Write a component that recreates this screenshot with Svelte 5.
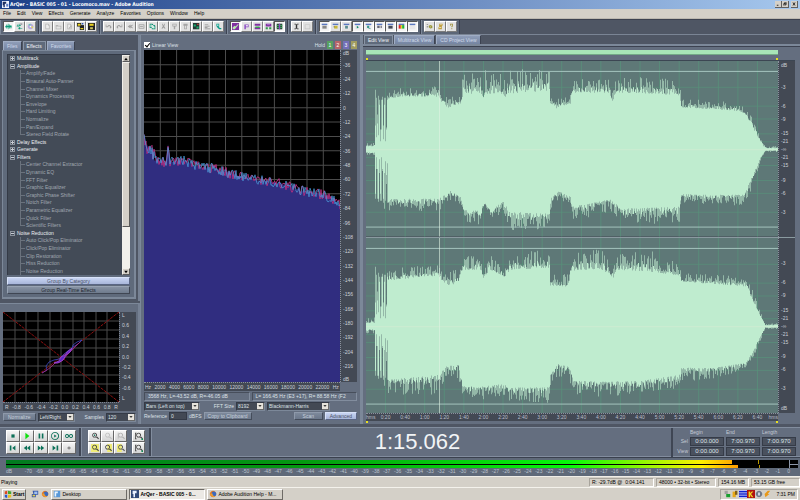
<script>
  let linearView = true;
  let effectTab = 'Effects';
  let viewTab = 'Edit View';
  let reference = '0';

  const menus = ['File', 'Edit', 'View', 'Effects', 'Generate', 'Analyze', 'Favorites', 'Options', 'Window', 'Help'];

  const page = 'M2 1h4l2 2v6H2z';
  const win = [['M1 1h8v8H1z', '#e8e8ea'], ['M1 1h8v2H1z', '#5a78c0']];

  // every icon is a list of [path, fill] on a 10x10 grid
  const toolGroups = [
    [
      { label: 'Edit view', on: true, art: [['M0 5h1V4h1V2h1v2h1V1h1v3h1V2h1v2h1V3h1v2h1v1H9v2H8V6H7v2H6V6H5v3H4V6H3v2H2V6H0z', '#0c9c78']] },
      { label: 'Multitrack view', art: [['M1 4h1V2h1v2h1V1h1v2h2v1H5v1H1zM3 7h1V6h2v1h3v1H6v1H4V8H3z', '#0c9c78'], ['M6 1h3v1H6z', '#445']] },
      { label: 'CD view', art: [['M5 1a4 4 0 1 0 .1 0z', '#b8a8dc'], ['M5 5L2 2a4 4 0 0 1 3-1z', '#60c8b0'], ['M5 5l3 3a4 4 0 0 0 1-3z', '#e0d850'], ['M4 4h2v2H4z', '#fff']] }
    ],
    [
      { label: 'New', art: [[page, '#b4b4b4'], ['M3 2h3v2h1v4H3z', '#ececec']] },
      { label: 'Open', art: [['M1 3h3l1 1h4v5H1z', '#b4b4b4'], ['M2 5h6v3H2z', '#e4e4e4']] },
      { label: 'Close', art: [[page, '#b4b4b4'], ['M3 2h3v2h1v4H3z', '#ececec'], ['M4 7l3-3 1 1-3 3z', '#aaa']] },
      { label: 'Save as', art: [['M0 0h6v5H0z', '#222'], ['M4 3h6v7H4z', '#222'], ['M1 1h4v3H1zM5 7h4v2H5z', '#e8d020'], ['M7 0h2v2H7z', '#2858c0']] },
      { label: 'Save', art: [['M0 0h10v10H0z', '#222'], ['M2 1h6v3H2z', '#e8d020'], ['M3 6h4v3H3z', '#c8c060']] }
    ],
    [
      { label: 'Undo', art: [['M1 2h1v3h1L5 3h2l2 2v2L7 8V5L6 4 4 6H1z', '#a0a0a0']] },
      { label: 'Redo', art: [['M9 2H8v3H7L5 3H3L1 5v2l2 1V5l1-1 2 2h3z', '#a0a0a0']] },
      { label: 'Repeat', art: [['M1 5l4-3v2l3-2v2L6 5l2 1v2L5 6v2z', '#a0a0a0']] },
      { label: 'Trim', art: [['M1 2h8v6H1zM2 3v4h6V3z', '#8a8a8a'], ['M3 4h4v2H3z', '#aaa']] },
      { label: 'Copy', art: [['M1 1h4l1 1v5H1zM4 3h4l1 1v5H4z', '#0c8c70'], ['M2 2h2v4H2zM5 4h2v1h1v3H5z', '#d0f0e4']] },
      { label: 'Cut', art: [['M3 1h1l1 3 1-3h1L6 5l2 3H6L5 6 4 8H2l2-3z', '#999']] },
      { label: 'Paste', art: [['M2 1h6v4H6v4H4V5H2z', '#a4a4a4'], ['M3 2h4v2H3z', '#ddd']] },
      { label: 'Paste to new', art: [['M2 1h6v3H7v5H3V4H2z', '#a4a4a4'], ['M4 4h2v4H4z', '#ddd']] },
      { label: 'Mix paste', art: [['M0 0h9v9H0z', '#243834'], ['M1 2h3v3H1zM5 5h3v3H5z', '#18b070'], ['M6 1h2v2H6z', '#d04030']] },
      { label: 'Adjust', art: [['M1 2h5v1H1zM1 4h7v1H1zM1 6h4v1H1zM1 8h8v1H1z', '#8a8a8a']] },
      { label: 'Find beats', art: [['M2 1h4v4H5l2 2h2v2H6L3 6V5H2z', '#0c9c88'], ['M3 2h2v2H3z', '#e0f8f0']] }
    ],
    [
      { label: 'Spectral view', on: true, art: [['M0 0h10v10H0z', '#8030a0'], ['M1 9V6l3-2 1 1 4-4v2L4 9z', '#b8e8b0']] },
      { label: 'Pan view', art: [['M2 2h6v4H4v3H2z', '#8848c0'], ['M4 3h3v2H4z', '#f0e8f8']] },
      { label: 'Group', art: [['M1 1h8v3H1zM1 6h8v3H1z', '#8030a0'], ['M2 5h6v2H2z', '#30a848']] },
      { label: 'Ungroup', art: [['M1 1h8v4H1z', '#8030a0'], ['M1 6h3v3H1zM6 6h3v3H6z', '#309848'], ['M3 2h4v1H3z', '#c090e0']] },
      { label: 'Snap', on: true, art: [['M1 1h8v8H1z', '#285038'], ['M1 3h8v1H1zM1 6h8v1H1z', '#40c060'], ['M4 1h2v8H4z', '#8848c0']] }
    ],
    [
      { label: 'Time selection', art: [['M2 1h2l1 1 1-1h2v1H6v6h2v1H6L5 8 4 9H2V8h2V2H2z', '#333']] },
      { label: 'Marquee', art: [['M1 2h8v1H1zM1 8h8v1H1zM1 3h1v5H1zM8 3h1v5H8z', '#c2c2c2']] }
    ],
    [
      { label: 'Organizer', on: true, art: [...win, ['M2 4h6v4H2z', '#888']] },
      { label: 'Cue list', art: [...win, ['M3 4h5v4H3z', '#c8b838'], ['M2 5h2v1H2z', '#666']] },
      { label: 'Play list', art: [...win, ['M3 4h4v4H3z', '#5a8c90']] },
      { label: 'Transport', on: true, art: [...win, ['M4 4l3 2-3 2z', '#108868']] },
      { label: 'Zoom', on: true, art: [...win, ['M3 4h3v3l2 1v1L4 7H3z', '#38988c']] },
      { label: 'Time', on: true, art: [...win, ['M2 4h2v3H2zM5 4h1v3H5zM7 4h1v3H7z', '#445']] },
      { label: 'Levels', on: true, art: [...win, ['M2 4h6v4H2z', '#444a58']] },
      { label: 'Spectrum', on: true, art: [...win, ['M1 3h3v5H1z', '#e02020'], ['M4 3h2v5H4z', '#e0d820'], ['M6 3h3v5H6z', '#20b030']] },
      { label: 'Phase', on: true, art: [...win] }
    ],
    [
      { label: 'Settings', art: [['M1 2h2v1H1zM1 5h2v1H1z', '#555'], ['M4 4l2-1 3 1v3L6 8 4 6z', '#9a9838'], ['M6 5h1v1H6z', '#eee']] },
      { label: 'Scripts', art: [['M3 1h5v3H7v5H2V6h1z', '#c0a040'], ['M4 2h3v1H4zM3 6h3v1H3z', '#f4ecd0']] },
      { label: 'Help', art: [['M3 1h4v4H6v1H5V4h1V2H4v2H3zM5 7h1v2H5z', '#9a8c30']] }
    ]
  ];

  const tree = [
    { name: 'Multitrack', open: false },
    { name: 'Amplitude', open: true, items: ['Amplify/Fade', 'Binaural Auto-Panner', 'Channel Mixer', 'Dynamics Processing', 'Envelope', 'Hard Limiting', 'Normalize', 'Pan/Expand', 'Stereo Field Rotate'] },
    { name: 'Delay Effects', open: false },
    { name: 'Generate', open: false },
    { name: 'Filters', open: true, items: ['Center Channel Extractor', 'Dynamic EQ', 'FFT Filter', 'Graphic Equalizer', 'Graphic Phase Shifter', 'Notch Filter', 'Parametric Equalizer', 'Quick Filter', 'Scientific Filters'] },
    { name: 'Noise Reduction', open: true, items: ['Auto Click/Pop Eliminator', 'Click/Pop Eliminator', 'Clip Restoration', 'Hiss Reduction', 'Noise Reduction'] }
  ];
  const rows = tree.flatMap((g) => [
    { name: g.name, group: true, open: g.open },
    ...(g.items || []).map((name, i) => ({ name, last: i === g.items.length - 1 && g.name !== 'Noise Reduction' }))
  ]);

  const phaseTicks = ['-0.8', '-0.6', '-0.4', '-0.2', '0.0', '0.2', '0.4', '0.6', '0.8'];
  const phaseSide = ['0.6', '0.4', '0.2', '0.0', '-0.2', '-0.4', '-0.6'];

  const transport = [
    { label: 'Stop', art: [['M3 3h4v4H3z', '#0c7058']] },
    { label: 'Play', art: [['M3 1l5 4-5 4z', '#10e010']] },
    { label: 'Pause', art: [['M2 2h2v6H2zM6 2h2v6H6z', '#0c7058']] },
    { label: 'Play to end', art: [['M5 0a5 5 0 1 0 .1 0zM5 1a4 4 0 1 1-.1 0z', '#0c7058'], ['M4 3l3 2-3 2z', '#0c7058']] },
    { label: 'Loop', art: [['M2.500 2.500a2.500 2.500 0 1 0 .1 0zM2.500 3.600a1.400 1.400 0 1 1-.1 0z', '#0c7058'], ['M7.500 2.500a2.500 2.500 0 1 0 .1 0zM7.500 3.600a1.400 1.400 0 1 1-.1 0z', '#0c7058']] },
    { label: 'Go to start', art: [['M1 2h2v6H1zM8 2v6L4 5z', '#0c7058']] },
    { label: 'Rewind', art: [['M5 2v6L1 5zM9 2v6L5 5z', '#0c7058']] },
    { label: 'Forward', art: [['M1 2l4 3-4 3zM5 2l4 3-4 3z', '#0c7058']] },
    { label: 'Go to end', art: [['M2 2l4 3-4 3zM7 2h2v6H7z', '#0c7058']] },
    { label: 'Record', art: [['M5 3a2 2 0 1 0 .1 0z', '#8c8c8c']] }
  ];

  const lens = 'M4.500 1a3 3 0 1 0 .1 0zM4.500 2a2 2 0 1 1-.1 0zM6 6l1-1 3 3-1 1z';
  const zooms = [
    { label: 'Zoom in', art: [[lens, '#444'], ['M4 3h1v2H4z', '#0c7058'], ['M3.500 3.500h2v1h-2z', '#0c7058']] },
    { label: 'Zoom out', art: [[lens, '#c0c0c0']] },
    { label: 'Zoom full', art: [[lens, '#b0b0b0'], ['M1 1h1v7H1z', '#b0b0b0']] },
    { label: 'Zoom to selection', art: [['M0 0h10v10H0z', '#f0ec78'], [lens, '#444']] },
    { label: 'Zoom to left edge', art: [['M4 0h6v10H4z', '#f0ec78'], [lens, '#444']] },
    { label: 'Zoom to right edge', art: [['M0 0h6v10H0z', '#f0ec78'], [lens, '#555']] }
  ];
  const vzooms = [
    { label: 'Zoom in vertically', art: [['M0 1h2v1H1v6h1v1H0z', '#444'], [lens, '#444'], ['M8 8h2v2H8z', '#0c9058']] },
    { label: 'Zoom out vertically', art: [['M0 1h2v1H1v6h1v1H0z', '#444'], [lens, '#444'], ['M8 8h2v2H8z', '#0c9058']] }
  ];

  function noise(seed) {
    let s = seed;
    return () => {
      s = (s * 1664525 + 1013904223) % 4294967296;
      return s / 4294967296;
    };
  }

  function at(points, x, k) {
    for (let i = 1; i < points.length; i++) {
      const a = points[i - 1];
      const b = points[i];
      if (x <= b[0]) return a[k] + ((b[k] - a[k]) * (x - a[0])) / (b[0] - a[0]);
    }
    return points[points.length - 1][k];
  }

  // [x, body, peak] for each half of each channel
  const env = {
    leftUp: [[0, 3, 6], [8, 3, 6], [21, 51, 56], [34, 53, 60], [72, 53, 62], [75, 48, 54], [81, 41, 50], [94, 46, 53], [97, 56, 74], [114, 56, 72], [117, 52, 60], [119, 56, 75], [136, 56, 73], [139, 53, 64], [142, 56, 75], [180, 59, 78], [183, 59, 76], [184, 45, 52], [189, 41, 49], [204, 46, 54], [206, 57, 68], [242, 57, 69], [246, 48, 58], [250, 57, 69], [290, 56, 70], [313, 54, 66], [315, 42, 49], [354, 40, 47], [374, 38, 44], [379, 35, 41], [385, 24, 31], [391, 13, 20], [397, 3, 5], [400, 1, 2], [412, 1, 3]],
    leftDown: [[0, 3, 6], [8, 3, 6], [21, 50, 60], [72, 50, 60], [84, 42, 50], [94, 48, 54], [98, 61, 72], [114, 62, 74], [118, 53, 60], [124, 61, 72], [137, 52, 60], [143, 63, 78], [183, 65, 78], [184, 50, 62], [192, 42, 50], [204, 48, 55], [206, 58, 70], [246, 50, 60], [254, 60, 72], [313, 58, 72], [315, 45, 52], [334, 46, 53], [374, 46, 55], [379, 42, 52], [386, 27, 38], [394, 8, 12], [399, 1, 2], [412, 1, 3]],
    rightUp: [[0, 3, 8], [8, 3, 8], [21, 46, 56], [72, 51, 60], [79, 41, 52], [92, 43, 56], [97, 57, 68], [114, 57, 69], [117, 49, 57], [124, 57, 70], [138, 49, 58], [144, 57, 70], [183, 59, 75], [184, 41, 50], [202, 40, 50], [205, 56, 70], [234, 58, 75], [247, 49, 57], [250, 57, 73], [284, 55, 72], [313, 51, 63], [315, 45, 52], [354, 42, 50], [380, 40, 47], [386, 26, 35], [394, 10, 14], [399, 1, 2], [412, 1, 3]],
    rightDown: [[0, 3, 7], [8, 3, 7], [21, 54, 66], [72, 49, 66], [79, 40, 50], [92, 39, 50], [97, 60, 71], [114, 61, 72], [137, 58, 68], [143, 62, 74], [183, 61, 74], [184, 47, 58], [192, 38, 48], [203, 41, 52], [207, 54, 68], [234, 56, 68], [274, 55, 67], [313, 49, 60], [315, 42, 53], [354, 41, 50], [379, 37, 42], [386, 26, 32], [394, 10, 14], [399, 1, 2], [412, 1, 3]]
  };
  const intro = [[24, 60], [12, 52], [26, 35], [14, 54], [45, 50], [8, 20], [20, 50], [50, 53], [10, 24], [45, 52], [8, 52], [20, 22], [50, 54]];

  function channel(up, down, seed) {
    const rand = noise(seed);
    const cols = [];
    for (let x = 0; x < 412; x++) {
      const side = [up, down].map((pts, n) => {
        if (x >= 9 && x < 22) return intro[(x - 9 + n * 4) % 13];
        const body = at(pts, x, 1);
        const gap = at(pts, x, 2) - body;
        const r = rand();
        return [body + gap * 0.5 * r * r, body + gap * (0.1 + 1.15 * rand() ** 1.4)];
      });
      cols.push(side);
    }
    const shape = (k) => cols.map((c, x) => `M${x} ${(89 - Math.max(c[0][k], 1)).toFixed(1)}h1V${(89 + Math.max(c[1][k], 1)).toFixed(1)}h-1z`).join('');
    return { body: shape(0), peaks: shape(1) };
  }

  const channels = [
    { name: 'Left channel', ...channel(env.leftUp, env.leftDown, 11) },
    { name: 'Right channel', ...channel(env.rightUp, env.rightDown, 57) }
  ];

  const levels = [
    [26, '-3'], [45, '-6'], [58, '-9'], [73, '-15'], [81, '-21'], [89, '-∞'], [97, '-21'], [105, '-15'], [120, '-9'], [133, '-6'], [152, '-3']
  ];
  const seconds = 421;
  const times = Array.from({ length: 20 }, (_, i) => (i + 1) * 20);
  const clock = (s) => `${Math.floor(s / 60)}:${String(s % 60).padStart(2, '0')}`;

  // spectrum curve, [x, y]
  const curve = [[0, 88], [3, 98], [5, 98], [9, 103], [12, 110], [22, 112], [24, 95], [26, 111], [40, 110], [56, 117], [71, 118], [86, 123], [101, 127], [116, 130], [136, 133], [156, 140], [174, 143], [186, 147], [196, 154]];
  function spectrum(seed, swing, lift) {
    const rand = noise(seed);
    let d = '';
    for (let x = 0; x <= 196; x++) {
      const big = x < 12 ? swing + 5 : swing;
      d += `${d ? 'L' : 'M'}${x} ${(at(curve, x, 1) + (rand() - 0.5) * big - lift).toFixed(1)}`;
    }
    return d;
  }
  const rightLine = spectrum(5, 10, 0);
  const leftLine = spectrum(23, 10, 0);
  const fill = spectrum(9, 3, 0) + 'V331H0z';
  const decibels = Array.from({ length: 22 }, (_, i) => 36 - i * 12);
  const hertz = Array.from({ length: 11 }, (_, i) => (i + 1) * 2000);
  const meterMarks = Array.from({ length: 71 }, (_, i) => i - 70);

  const ranges = [
    { name: 'Sel', values: ['0:00.000', '7:00.970', '7:00.970'] },
    { name: 'View', values: ['0:00.000', '7:00.970', '7:00.970'] }
  ];
</script>

{#snippet icon(art)}
  <svg viewBox="0 0 10 10" aria-hidden="true">
    {#each art as [d, color]}<path {d} fill={color} fill-rule="evenodd" />{/each}
  </svg>
{/snippet}

<div class="app">
  <header class="titlebar">
    <span class="logo">{@render icon([['M0 0h10v10H0z', '#f0f4ff'], ['M1 1h5v3H4v5H2V6H1z', '#1c2c60'], ['M6 4h3v4H6z', '#6080c8']])}</span>
    <h1>ArQer - BASIC 005 - 01 - Locomoco.mav - Adobe Audition</h1>
    <button aria-label="Minimize">{@render icon([['M2 7h4v2H2z', '#000']])}</button>
    <button aria-label="Restore">{@render icon([['M3 1h6v6H7v2H1V4h2zM4 3v1h3v2h1V3zM2 6v2h4V6z', '#000']])}</button>
    <button class="close" aria-label="Close">{@render icon([['M1 1h2l2 3 2-3h2L6 5l3 4H7L5 6 3 9H1l3-4z', '#000']])}</button>
  </header>

  <nav class="menubar">
    {#each menus as menu}<button>{menu}</button>{/each}
  </nav>

  <div class="toolbar">
    {#each toolGroups as group}
      <div class="tools">
        {#each group as tool}
          <button class:on={tool.on} aria-label={tool.label}>{@render icon(tool.art)}</button>
        {/each}
      </div>
    {/each}
  </div>

  <main>
    <div class="left">
      <section class="effects">
        <div class="tabs">
          {#each ['Files', 'Effects', 'Favorites'] as tab}
            <button class:active={effectTab === tab} on:click={() => (effectTab = tab)}>{tab}</button>
          {/each}
        </div>
        <div class="effects-body">
          <div class="tree-box">
            <ul class="tree">
              {#each rows as row}
                <li class:group={row.group} class:last={row.last}>
                  {#if row.group}<i class="box" class:plus={!row.open}></i>{/if}<span>{row.name}</span>
                </li>
              {/each}
            </ul>
            <div class="scroll">
              <button aria-label="Scroll up">{@render icon([['M5 3l3 4H2z', '#000']])}</button>
              <div class="thumb"></div>
              <div class="track"></div>
              <button aria-label="Scroll down">{@render icon([['M5 7L2 3h6z', '#000']])}</button>
            </div>
          </div>
          <button class="wide lit">Group By Category</button>
          <button class="wide">Group Real-Time Effects</button>
        </div>
      </section>

      <section class="phase">
        <div class="phase-grid">
          <svg viewBox="0 0 116 90" preserveAspectRatio="none" aria-label="Phase analysis">
            <rect width="116" height="90" fill="#000" />
            {#each [12, 23, 35, 47, 58, 70, 81, 93, 104] as x}<path d="M{x} 0v90" stroke="#4a4a4a" />{/each}
            {#each [9, 18, 27, 36, 45, 54, 63, 72, 81] as y}<path d="M0 {y}h116" stroke="#4a4a4a" />{/each}
            <path d="M0 0L116 90M116 0L0 90" stroke="#8c1010" stroke-dasharray="3 1" />
            <path d="M39 61L44 58 43 54 46 50 51 48 56 47 61 42 66 38 69 37 70 33 74 30 79 28 75 32 70 35 67 40" fill="none" stroke="#3c48c0" stroke-width="0.8" />
            <path d="M39 61L44 58 48 55 52 51 57 50 60 48 64 43 68 39 72 35 77 30" fill="none" stroke="#b02888" stroke-width="0.8" />
            <path d="M51 51l5-2 2-4 4-2 2-3 5-4-2 4-4 3-3 5-5 3z" fill="#5a28c0" stroke="#a848d8" stroke-width="0.8" />
          </svg>
          <div class="phase-side">
            <span>L</span>
            {#each phaseSide as tick}<span>{tick}</span>{/each}
            <span>L</span>
          </div>
          <div class="phase-base">
            <span>R</span>
            {#each phaseTicks as tick}<span>{tick}</span>{/each}
            <span>R</span>
          </div>
        </div>
        <div class="row">
          <button class="push">Normalize</button>
          <div class="pick mode">
            <select aria-label="Phase mode"><option>Left/Right</option></select>
            <i>{@render icon([['M5 7L1 3h8z', '#000']])}</i>
          </div>
          <label class="samples" for="samples">Samples</label>
          <div class="pick count">
            <select id="samples"><option>120</option></select>
            <i>{@render icon([['M5 7L1 3h8z', '#000']])}</i>
          </div>
        </div>
      </section>
    </div>

    <section class="frequency">
      <div class="row head">
        <input id="linear" type="checkbox" bind:checked={linearView} />
        <label for="linear">Linear View</label>
        <span class="hold">Hold</span>
        <button class="chip green">1</button>
        <button class="chip red">2</button>
        <button class="chip blue">3</button>
        <button class="chip olive">4</button>
      </div>
      <div class="plot">
        <svg viewBox="0 0 196 331" preserveAspectRatio="none" aria-label="Frequency analysis">
          <rect width="196" height="331" fill="#000" />
          {#each hertz as hz, i}<path d="M{(i + 1) * 16.3} 0v331" stroke="#4c4c4c" />{/each}
          {#each decibels as db, i}<path d="M0 {14.7 + i * 14.3}h196" stroke="#4c4c4c" />{/each}
          <path d={fill} fill="#302d80" />
          <path d={rightLine} fill="none" stroke="#b83080" stroke-width="0.9" />
          <path d={leftLine} fill="none" stroke="#4a98d8" stroke-width="0.9" stroke-opacity="0.85" />
        </svg>
        <div class="scale">
          <span style="top: 1%">dB</span>
          {#each decibels as db, i}<span style="top: {((14.7 + i * 14.3) / 331) * 100}%">{db > 0 ? '-' + db : db}</span>{/each}
          <span style="top: 99%">dB</span>
        </div>
      </div>
      <div class="hertz">
        <span>Hz</span>
        {#each hertz as hz}<span>{hz}</span>{/each}
        <span>Hz</span>
      </div>
      <div class="row readout">
        <output>3568 Hz, L=-43.52 dB, R=-46.05 dB</output>
        <output>L= 166.45 Hz (E3 +17), R= 88.58 Hz (F2</output>
      </div>
      <div class="row">
        <div class="pick bars">
          <select aria-label="Graph style"><option>Bars (Left on top)</option></select>
          <i>{@render icon([['M5 7L1 3h8z', '#000']])}</i>
        </div>
        <label class="fft" for="fft">FFT Size</label>
        <div class="pick size">
          <select id="fft"><option>8192</option></select>
          <i>{@render icon([['M5 7L1 3h8z', '#000']])}</i>
        </div>
        <div class="pick shape">
          <select aria-label="Window function"><option>Blackmann-Harris</option></select>
          <i>{@render icon([['M5 7L1 3h8z', '#000']])}</i>
        </div>
      </div>
      <div class="row">
        <label for="reference">Reference</label>
        <input id="reference" class="field" bind:value={reference} />
        <span class="unit">dBFS</span>
        <button class="push copy">Copy to Clipboard</button>
        <button class="push scan">Scan</button>
        <button class="push lit">Advanced</button>
      </div>
    </section>

    <section class="editor">
      <div class="tabs">
        {#each ['Edit View', 'Multitrack View', 'CD Project View'] as tab}
          <button class:active={viewTab === tab} on:click={() => (viewTab = tab)}>{tab}</button>
        {/each}
      </div>
      <div class="wave-frame">
        <div class="overview"></div>
        <div class="flags"><i></i><i></i></div>
        <div class="waves">
          {#each channels as ch, n}
            <div class="channel">
              <svg viewBox="0 0 412 177" preserveAspectRatio="none" aria-label={ch.name}>
                <rect width="412" height="177" fill="#5e7877" />
                {#each times as t}<path d="M{(t / seconds) * 412} 0v177" stroke="#58917a" stroke-opacity="0.8" />{/each}
                {#each levels as [y]}<path d="M0 {y + 0.5}h412" stroke="#58917a" stroke-opacity="0.7" />{/each}
                <path d={ch.peaks} fill="#94b8a8" />
                <path d={ch.body} fill="#bfeccf" />
                <path d="M0 89.500h412" stroke="#cdebd2" />
                <path d="M0 10.500h412M0 167.500h412" stroke="#a4c4bd" />
                <path d="M73.500 0v177" stroke="#e0f4e4" stroke-opacity="0.6" />
              </svg>
              <div class="scale">
                {#if n === 0}<span style="top: 2%">dB</span>{/if}
                {#each levels as [y, text]}<span style="top: {(y / 177) * 100}%">{text}</span>{/each}
                {#if n === 1}<span style="top: 97%">dB</span>{/if}
              </div>
            </div>
          {/each}
        </div>
        <div class="timeline">
          <span class="start">hms</span>
          {#each times as t}<span style="left: {(t / seconds) * 100}%">{clock(t)}</span>{/each}
          <span class="end">hms</span>
        </div>
        <div class="flags low"><i></i><i></i></div>
      </div>
    </section>
  </main>

  <div class="controls">
    <div class="pads transport">
      {#each transport as b}<button aria-label={b.label}>{@render icon(b.art)}</button>{/each}
    </div>
    <div class="pads zoom">
      {#each zooms as b}<button aria-label={b.label}>{@render icon(b.art)}</button>{/each}
    </div>
    <div class="pads vertical">
      {#each vzooms as b}<button aria-label={b.label}>{@render icon(b.art)}</button>{/each}
    </div>
    <div class="time">1:15.062</div>
    <table class="ranges">
      <thead>
        <tr><td></td><th scope="col">Begin</th><th scope="col">End</th><th scope="col">Length</th></tr>
      </thead>
      <tbody>
        {#each ranges as range}
          <tr>
            <th scope="row">{range.name}</th>
            {#each range.values as value}<td>{value}</td>{/each}
          </tr>
        {/each}
      </tbody>
    </table>
  </div>

  <div class="meter">
    <div class="meter-bars">
      <svg viewBox="0 0 792 8" preserveAspectRatio="none" aria-label="Level meter">
        <defs>
          <linearGradient id="level" gradientUnits="userSpaceOnUse" x1="0" y1="0" x2="732" y2="0">
            <stop offset="0" stop-color="#027a20" />
            <stop offset="0.4" stop-color="#049810" />
            <stop offset="0.77" stop-color="#06f808" />
            <stop offset="0.87" stop-color="#90f800" />
            <stop offset="0.95" stop-color="#fff000" />
            <stop offset="1" stop-color="#ff9c00" />
          </linearGradient>
        </defs>
        <rect width="792" height="8" fill="#000" />
        <rect width="726" height="4" fill="url(#level)" />
        <rect y="5" width="732" height="3" fill="url(#level)" />
        <path d="M752.500 0v4M753.500 5v3" stroke="#b89800" />
        <path d="M783.500 0v8" stroke="#8c96a8" />
        <path d="M784 4.500h8" stroke="#8c96a8" />
      </svg>
    </div>
    <div class="meter-marks">
      <span class="first">dB</span>
      {#each meterMarks as m}<span>{m}</span>{/each}
    </div>
  </div>

  <footer class="status">
    <span class="message">Playing</span>
    <span class="cell peak">R: -29.7dB @ &nbsp;0:04.141</span>
    <span class="cell format">48000 • 32-bit • Stereo</span>
    <span class="cell">154.16 MB</span>
    <span class="cell free">53.15 GB free</span>
  </footer>

  <div class="taskbar">
    <button class="start-button">{@render icon([['M1 2l3-1v4H1z', '#e04820'], ['M5 1l4 1v3H5z', '#40a830'], ['M1 6h3v4L1 9z', '#2858d0'], ['M5 6h4v3l-4 1z', '#e8c020']])}Start</button>
    <button class="quick" aria-label="Show desktop">{@render icon([['M2 1h7v5H6v3H1V5h2z', '#3858a8'], ['M4 2h4v3H4z', '#a0c0f0'], ['M2 6h3v2H2z', '#e8d048']])}</button>
    <button class="quick" aria-label="Firefox">{@render icon([['M5 1a4 4 0 1 0 .1 0z', '#e87820'], ['M6 2a3 3 0 1 0 .1 0z', '#3868c0'], ['M1 5l3-1 1 3 3 1-3 1z', '#f0a030']])}</button>
    <button class="task">{@render icon([['M1 1h8v8H1z', '#5898d8'], ['M2 2h4v2H4v4H2z', '#e8f4ff']])}<span>Desktop</span></button>
    <button class="task current">{@render icon([['M0 0h10v10H0z', '#304878'], ['M2 1h5v3H5v5H3V5H2z', '#e8f0ff']])}<span>ArQer - BASIC 005 - 0...</span></button>
    <button class="task">{@render icon([['M5 1a4 4 0 1 0 .1 0z', '#e87820'], ['M6 2a3 3 0 1 0 .1 0z', '#3868c0'], ['M1 5l3-1 1 3 3 1-3 1z', '#f0a030']])}<span>Adobe Audition Help - M...</span></button>
    <div class="tray">
      {@render icon([['M2 1h4v4H2z', '#a0a0a0'], ['M4 5h5v4H4z', '#18a030']])}
      {@render icon([['M2 2h4v7H2z', '#e8a818'], ['M5 1h3v5H5z', '#806018']])}
      {@render icon([['M0 0h10v10H0z', '#f4f4ff'], ['M0 1h10v2H0zM0 4h10v2H0zM0 7h10v2H0z', '#1020d0']])}
      {@render icon([['M0 0h10v10H0z', '#b01010'], ['M2 2h2v2l2-2h2L5 5l3 4H6L4 6v3H2z', '#f0e020']])}
      {@render icon([['M5 1a4 4 0 1 0 .1 0z', '#707888'], ['M4 3h2v4H4z', '#e8ecf4']])}
      {@render icon([['M2 5l4-4h3L6 5h2L3 9z', '#e89818']])}
      <time>7:31 PM</time>
    </div>
  </div>
</div>

<style>
  :global(body) {
    margin: 0;
    background: #4f5664;
  }

  * {
    box-sizing: border-box;
  }

  .app {
    display: flex;
    flex-direction: column;
    height: 100vh;
    overflow: hidden;
    background: #4f5664;
    color: #dde1e7;
    font: 5px/7px "Liberation Sans", Arial, sans-serif;
  }

  button, select, input {
    margin: 0;
    padding: 0;
    border: 0;
    border-radius: 0;
    background: none;
    color: inherit;
    font: inherit;
  }

  svg {
    display: block;
  }

  .titlebar {
    display: flex;
    align-items: center;
    height: 9px;
    padding: 0 2px;
    background: linear-gradient(90deg, #1c4088, #7090c4 60%, #a6c8ee);
    color: #fff;
  }

  .logo {
    width: 7px;
    margin-right: 1px;
  }

  h1 {
    flex: 1;
    margin: 0;
    font: bold 5px/7px "DejaVu Sans Condensed", "DejaVu Sans", sans-serif;
  }

  .titlebar button {
    width: 7px;
    height: 7px;
    padding: 1px;
    background: #d4d0c8;
    border-right: 1px solid #606060;
    border-bottom: 1px solid #606060;
  }

  .titlebar .close {
    margin-left: 2px;
  }

  .menubar {
    display: flex;
    gap: 6px;
    height: 10px;
    padding: 0 3px;
    background: #d4d0c8;
    border-bottom: 1px solid #bcb8b0;
    color: #000;
  }

  .toolbar {
    display: flex;
    height: 16px;
    border-top: 1px solid #3c4250;
    border-bottom: 1px solid #7a8494;
  }

  .tools {
    display: flex;
    padding: 1px 2px 2px;
    background: #5c6677;
    border-left: 1px solid #7d8899;
    border-right: 1px solid #3c4250;
  }

  .tools button {
    width: 11px;
    height: 11px;
    padding: 1px;
    background: #e2e2e2;
    border: 1px solid #fff;
    border-right-color: #7c7c7c;
    border-bottom-color: #7c7c7c;
  }

  .tools button.on {
    background: #f4f4f4;
    border-color: #555 #fff #fff #555;
  }

  main {
    flex: 1;
    display: grid;
    grid-template-columns: 140px 221px 1fr;
    min-height: 0;
    padding-bottom: 3px;
  }

  .left, .effects, .effects-body, .phase, .frequency, .editor, .wave-frame {
    display: flex;
    flex-direction: column;
    min-width: 0;
    min-height: 0;
  }

  .effects {
    flex: 1;
    padding: 6px 2px 2px;
    border-right: 2px solid #768193;
  }

  .tabs {
    display: flex;
    gap: 1px;
    padding-left: 1px;
  }

  .tabs button {
    height: 9px;
    padding: 0 3px;
    background: linear-gradient(#8f9db8, #7585a2);
    border: 1px solid #a0adc4;
    border-right-color: #3c4250;
    border-bottom: 0;
    color: #d0daea;
    line-height: 8px;
  }

  .tabs .active {
    background: #5f6a7b;
    border-color: #8994a5;
    color: #f0f3f7;
  }

  .effects-body {
    flex: 1;
    gap: 1px;
    padding: 3px 4px;
    background: #5f6a7b;
    border: 1px solid #7c8899;
    border-right-width: 2px;
    border-bottom-width: 2px;
  }

  .tree-box {
    flex: 1;
    display: flex;
    min-height: 0;
    margin-bottom: 1px;
    background: #434b57;
    border-top: 1px solid #343a46;
    border-left: 1px solid #343a46;
  }

  .tree {
    flex: 1;
    display: grid;
    grid-auto-rows: 1fr;
    margin: 0;
    padding: 0 0 0 2px;
    list-style: none;
  }

  .tree li {
    display: flex;
    align-items: center;
    min-height: 0;
    margin-left: 10px;
    border-left: 1px solid #6a727d;
    color: #a0a7b0;
    white-space: nowrap;
  }

  .tree li::before {
    content: '';
    width: 4px;
    margin-right: 1px;
    border-top: 1px solid #6a727d;
  }

  .tree li.group {
    margin-left: 0;
    border-left: 0;
    color: #eceff3;
  }

  .tree li.group::before {
    content: none;
  }

  .tree li.last {
    border-image: linear-gradient(#6a727d 55%, transparent 55%) 1;
  }

  .box {
    width: 5px;
    height: 5px;
    margin-right: 2px;
    background: linear-gradient(#c8ccd4, #c8ccd4) center / 3px 1px no-repeat;
    border: 1px solid #8a929c;
  }

  .box.plus {
    background: linear-gradient(#c8ccd4, #c8ccd4) center / 3px 1px no-repeat, linear-gradient(#c8ccd4, #c8ccd4) center / 1px 3px no-repeat;
  }

  .scroll {
    display: flex;
    flex-direction: column;
    width: 8px;
    background: #f2f1ec;
  }

  .scroll button, .thumb {
    background: #d4d0c8;
    border: 1px solid #f2f0ea;
    border-right-color: #5a5a5a;
    border-bottom-color: #5a5a5a;
  }

  .scroll button {
    height: 7px;
  }

  .thumb {
    flex: 4;
  }

  .track {
    flex: 1;
  }

  .wide {
    height: 8px;
    background: linear-gradient(#8792a3, #6f7b8d);
    border: 1px solid #98a3b3;
    border-bottom-color: #3f4653;
    border-right-color: #3f4653;
    color: #20252e;
    line-height: 6px;
  }

  .lit, .push.lit {
    background: linear-gradient(#c8d4f2, #a8b6da);
    border-color: #d8e2f8 #5a6684 #5a6684 #d8e2f8;
    color: #4a5268;
  }

  .phase {
    gap: 1px;
    margin-top: 2px;
    padding: 8px 2px 2px 3px;
    background: #646e7f;
    border-top: 1px solid #7c8899;
    border-right: 2px solid #768193;
  }

  .phase-grid {
    display: grid;
    grid-template-columns: 1fr 17px;
    background: #434954;
  }

  .phase-grid svg {
    width: 100%;
    height: 90px;
  }

  .phase-side, .phase-base {
    display: flex;
    justify-content: space-between;
    color: #ccd1d9;
  }

  .phase-side {
    flex-direction: column;
    padding-left: 2px;
    border-left: 1px dotted #7c8492;
  }

  .phase-base {
    height: 9px;
    padding: 1px 1px 0 2px;
    border-top: 1px dotted #7c8492;
  }

  .row {
    display: flex;
    align-items: center;
    gap: 2px;
    min-height: 10px;
  }

  .push {
    height: 8px;
    padding: 0 4px;
    background: linear-gradient(#7d899b, #6b778a);
    border: 1px solid #8e99aa;
    border-right-color: #454d5b;
    border-bottom-color: #454d5b;
    color: #c8d1dd;
    line-height: 6px;
  }

  .pick {
    position: relative;
  }

  .pick select {
    display: block;
    width: 100%;
    height: 9px;
    padding: 0 8px 0 1px;
    appearance: none;
    background: #434954;
    border: 1px solid #343a46;
    border-right-color: #7c8899;
    border-bottom-color: #7c8899;
    line-height: 7px;
  }

  .pick i {
    position: absolute;
    top: 1px;
    right: 1px;
    width: 7px;
    height: 7px;
    padding: 1px;
    background: #e6e3dc;
    border-right: 1px solid #6a6a6a;
    border-bottom: 1px solid #6a6a6a;
    pointer-events: none;
  }

  .mode {
    width: 37px;
  }

  .samples {
    margin-left: auto;
  }

  .count {
    width: 30px;
  }

  .frequency {
    padding: 5px 3px 3px;
    background: #646e7f;
    border-left: 1px solid #7c8899;
    border-right: 1px solid #7c8899;
  }

  .frequency input[type='checkbox'] {
    width: 6px;
    height: 6px;
    appearance: none;
    background: #fff;
  }

  .frequency input[type='checkbox']:checked::after {
    content: '';
    display: block;
    width: 2px;
    height: 4px;
    margin: 0 auto;
    border: solid #000;
    border-width: 0 1px 1px 0;
    transform: rotate(40deg);
  }

  .hold {
    margin-left: auto;
  }

  .chip {
    width: 6px;
    height: 8px;
    background: #58a060;
    color: #fff;
    line-height: 8px;
  }

  .red { background: #b86468; }
  .blue { background: #7470b8; }
  .olive { background: #a09c60; }

  .plot, .channel {
    flex: 1;
    display: grid;
    grid-template-columns: 1fr 17px;
    min-height: 0;
    background: #434954;
  }

  .plot svg, .channel svg {
    width: 100%;
    height: 100%;
    min-height: 0;
  }

  .scale {
    position: relative;
    border-left: 1px dotted #8a919d;
    color: #ccd1d9;
  }

  .scale span {
    position: absolute;
    left: 2px;
    transform: translateY(-50%);
  }

  .hertz {
    display: flex;
    justify-content: space-between;
    height: 9px;
    margin-right: 17px;
    padding: 1px 1px 0;
    background: #434954;
    border-top: 1px dotted #8a919d;
    color: #ccd1d9;
  }

  .readout output {
    flex: 1;
    height: 9px;
    padding-left: 3px;
    border: 1px solid #474e5b;
    border-right-color: #828d9e;
    border-bottom-color: #828d9e;
    white-space: nowrap;
  }

  .bars {
    width: 56px;
  }

  .fft {
    margin-left: auto;
  }

  .size {
    width: 29px;
  }

  .shape {
    width: 63px;
    margin-right: 27px;
  }

  .field {
    width: 18px;
    height: 8px;
    padding-left: 1px;
    background: #434954;
    border: 1px solid #343a46;
  }

  .copy {
    width: 48px;
    padding: 0;
  }

  .scan {
    width: 29px;
    margin-left: auto;
  }

  .editor {
    border-left: 2px solid #7c8899;
  }

  .editor .tabs {
    border-bottom: 2px solid #7c8899;
  }

  .wave-frame {
    flex: 1;
    padding: 3px 5px 0 3px;
    background: #646e7f;
    border-top: 1px solid #3c4250;
  }

  .overview {
    height: 5px;
    margin-right: 17px;
    background: #a8e4b8;
    border-bottom: 1px solid #74a888;
  }

  .flags {
    display: flex;
    justify-content: space-between;
    align-items: end;
    height: 5px;
    margin-right: 17px;
  }

  .flags.low {
    align-items: start;
    height: 3px;
  }

  .flags i {
    width: 2px;
    height: 2px;
    background: #e8e020;
  }

  .waves {
    flex: 1;
    display: flex;
    flex-direction: column;
    gap: 1px;
    min-height: 0;
    background: #8a9aa0;
    border-top: 1px solid #3c4653;
  }

  .timeline {
    position: relative;
    height: 8px;
    margin-right: 17px;
    background: #434954;
    border-top: 1px dotted #8a919d;
    color: #b8bec8;
  }

  .timeline span {
    position: absolute;
    top: 0;
    transform: translateX(-50%);
  }

  .timeline .start {
    left: 0;
    transform: none;
  }

  .timeline .end {
    right: 0;
    left: auto;
    transform: none;
  }

  .controls {
    display: flex;
    height: 30px;
    background: #646e7f;
    border-top: 1px solid #828d9e;
    border-bottom: 1px solid #828d9e;
  }

  .pads {
    display: grid;
    align-content: center;
    padding: 0 4px 0 6px;
  }

  .pads button {
    height: 12px;
    padding: 1px;
    background: linear-gradient(#f4f4f4, #d4d4d4);
    border: 1px solid #fff;
    border-right-color: #666;
    border-bottom-color: #666;
  }

  .pads svg {
    height: 8px;
    margin: 0 auto;
  }

  .transport {
    grid-template-columns: repeat(5, 14px);
    padding-right: 3px;
    border-right: 2px solid #3f4654;
  }

  .zoom {
    grid-template-columns: repeat(3, 13px);
    padding-right: 0;
    border-left: 1px solid #828d9e;
  }

  .vertical {
    grid-template-columns: 13px;
    padding-left: 5px;
    border-right: 2px solid #3f4654;
  }

  .time {
    flex: 1;
    padding-left: 12px;
    border-left: 1px solid #828d9e;
    color: #f2f4f6;
    font-size: 22px;
    line-height: 27px;
    text-align: center;
  }

  .ranges {
    width: 129px;
    padding: 0 2px;
    border-left: 2px solid #3f4654;
    border-spacing: 2px 1px;
  }

  .ranges th, .ranges td {
    padding: 0 2px;
    font-weight: normal;
    line-height: 7px;
  }

  .ranges th {
    padding: 0;
    color: #c4cbd6;
    text-align: left;
  }

  .ranges tbody th {
    text-align: right;
  }

  .ranges tbody td {
    width: 34px;
    background: #4a515e;
    border: 1px solid #363c48;
    font-size: 6px;
    text-align: center;
  }

  .meter {
    height: 19px;
    padding: 2px 2px 0 6px;
    background: #5f6979;
    border-top: 1px solid #3a414e;
  }

  .meter-bars svg {
    width: 100%;
    height: 8px;
  }

  .meter-marks {
    display: grid;
    grid-template-columns: 17px repeat(71, 1fr) 4px;
    color: #bcc3ce;
    text-align: center;
  }

  .meter-marks .first {
    text-align: left;
  }

  .status {
    display: flex;
    align-items: center;
    gap: 2px;
    height: 11px;
    padding: 0 0 0 1px;
    background: #d4d0c8;
    border-top: 1px solid #f0eee8;
    color: #000;
  }

  .message {
    flex: 1;
  }

  .cell {
    min-width: 31px;
    height: 9px;
    padding: 0 2px;
    border: 1px solid #a8a49c;
    border-right-color: #fff;
    border-bottom-color: #fff;
    white-space: nowrap;
  }

  .peak {
    min-width: 65px;
  }

  .format {
    min-width: 60px;
  }

  .free {
    min-width: 49px;
  }

  .taskbar {
    display: flex;
    align-items: center;
    gap: 2px;
    height: 13px;
    padding: 0 2px;
    background: #d4d0c8;
    border-top: 1px solid #f4f2ec;
    color: #000;
  }

  .taskbar svg {
    flex: none;
    width: 8px;
    height: 8px;
  }

  .start-button, .task {
    display: flex;
    align-items: center;
    gap: 1px;
    height: 11px;
    padding: 0 1px;
    border: 1px solid #fff;
    border-right-color: #6e6b66;
    border-bottom-color: #6e6b66;
  }

  .start-button {
    margin-right: 3px;
    font-weight: bold;
  }

  .task {
    width: 76px;
    overflow: hidden;
    white-space: nowrap;
  }

  .task.current {
    background: #ebe9e4;
    border-color: #6e6b66 #fff #fff #6e6b66;
    font-weight: bold;
  }

  .tray {
    display: flex;
    align-items: center;
    height: 11px;
    margin-left: auto;
    padding: 0 2px;
    border: 1px solid #a8a49c;
    border-right-color: #fff;
    border-bottom-color: #fff;
  }

  .tray time {
    margin-left: 5px;
  }
</style>
